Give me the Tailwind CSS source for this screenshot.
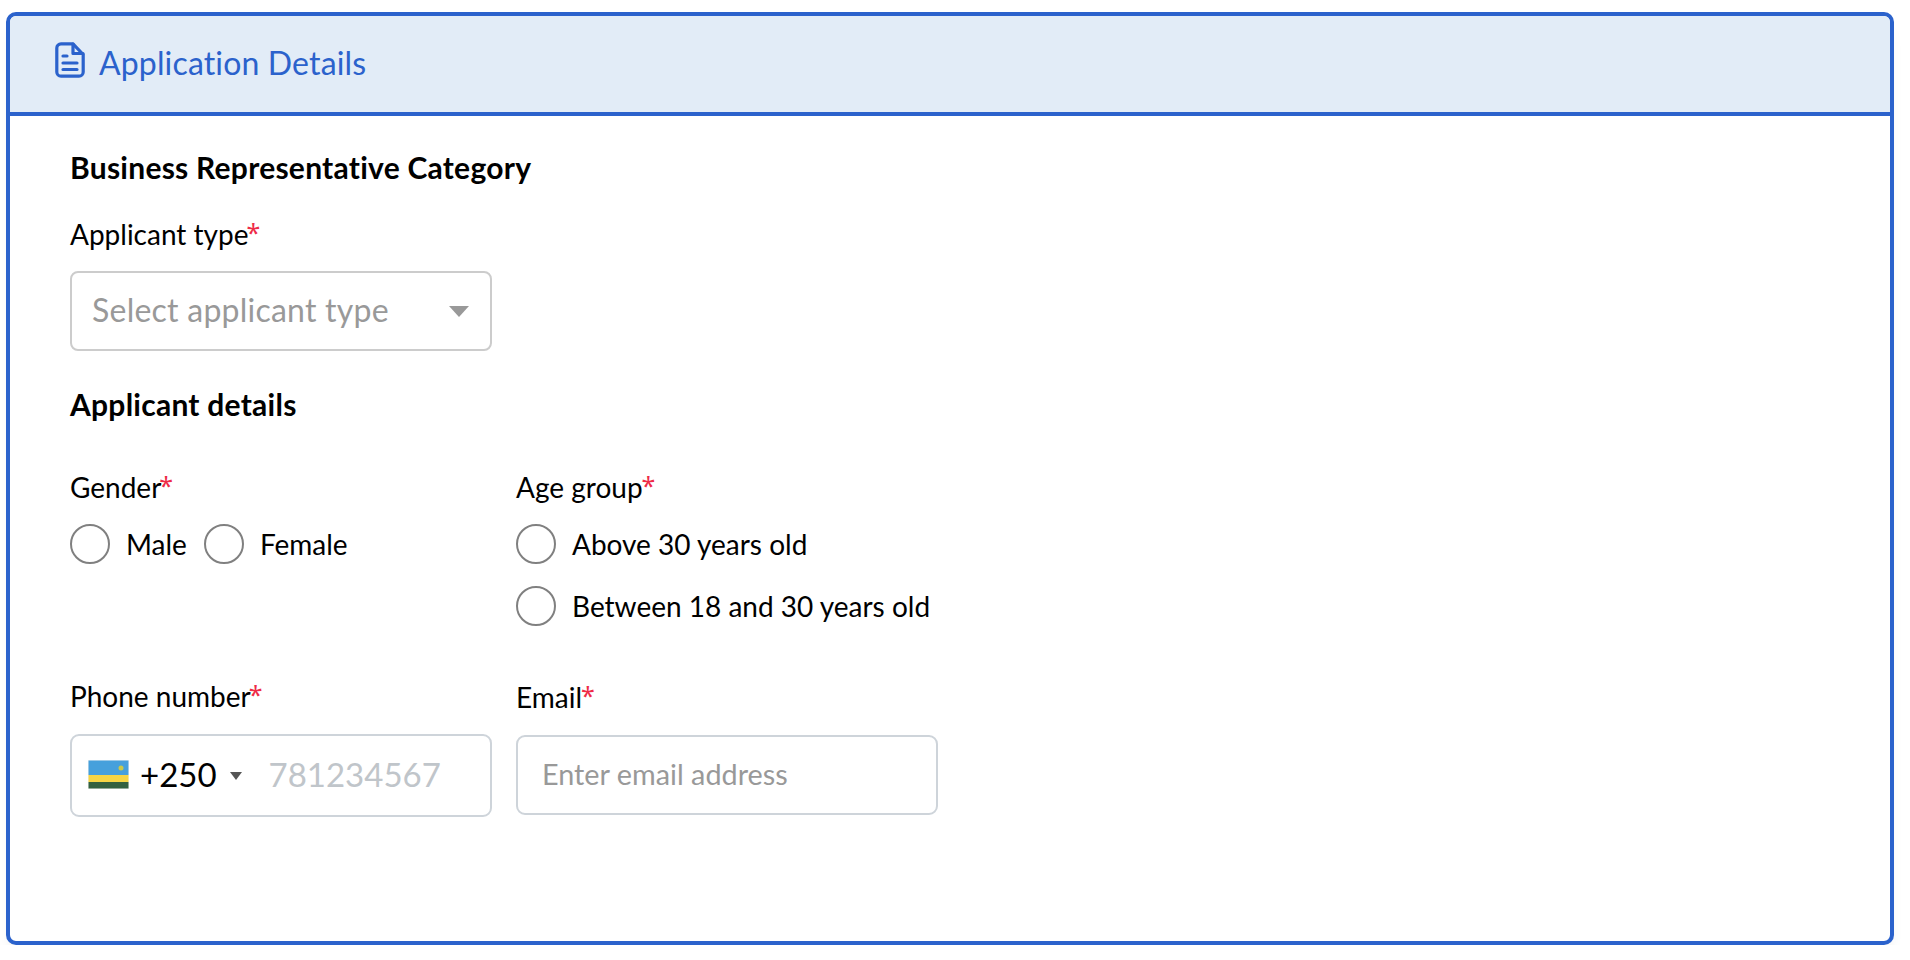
<!doctype html>
<html lang="en">
  <head>
    <meta charset="UTF-8" />
    <title>Application Details</title>
    <script src="https://cdn.jsdelivr.net/npm/@tailwindcss/browser@4"></script>
  </head>
  <body class="bg-white font-['Lato','Noto_Sans',sans-serif] text-black [font-variant-ligatures:none]">
    <!-- card -->
    <section class="mt-3 ml-1.5 w-[1888px] h-[933px] border-4 border-[#2b62cc] rounded-[10px] overflow-hidden bg-white shadow-[0_14px_16px_-6px_rgba(0,0,0,0.08)]">
      <header class="h-[96px] bg-[#e2ecf7] border-b-4 border-[#2b62cc] box-content -mb-1 flex items-center pl-[45px] gap-[14px] text-[#2b62cc]">
        <svg class="w-[30px] h-[36px] -mt-[8px]" viewBox="0 0 30 36" fill="none" stroke="currentColor" stroke-width="3.200" stroke-linejoin="round" stroke-linecap="round">
          <path d="M6 1.800H18L28.200 12.500V30A4.200 4.200 0 0 1 24 34.200H6A4.200 4.200 0 0 1 1.800 30V6A4.200 4.200 0 0 1 6 1.800Z" />
          <path d="M18 2V11.500H28" />
          <path d="M8 14H12M8 21H22M8 27.500H22" />
        </svg>
        <h2 class="text-[32px] leading-[40px] -mt-[2px] tracking-[0.15px]">Application Details</h2>
      </header>

      <div class="pl-[60px] pt-[35px]">
        <h3 class="text-[30px] leading-[40px] font-bold tracking-[0.25px]">Business Representative Category</h3>

        <label class="block mt-[27px] text-[28px] leading-[40px]">Applicant type<span class="-ml-[2px] align-[3px] font-['Noto_Sans'] text-[25px] leading-none text-[#ee2b47]">*</span></label>
        <div class="mt-[17px] w-[422px] h-[80px] border-2 border-[#cccccc] rounded-[8px] flex items-center justify-between pl-[20px] pr-[21px]">
          <span class="-mt-[2px] text-[32px] tracking-[0.24px] text-[#999999]">Select applicant type</span>
          <span class="w-0 h-0 border-x-[10px] border-x-transparent border-t-[11px] border-t-[#999999]"></span>
        </div>

        <h3 class="mt-[33px] text-[30px] leading-[40px] font-bold tracking-[0.25px]">Applicant details</h3>

        <div class="mt-[43px] grid grid-cols-[422px_422px] gap-x-[24px]">
          <div>
            <label class="block text-[28px] leading-[40px]">Gender<span class="-ml-[2px] align-[3px] font-['Noto_Sans'] text-[25px] leading-none text-[#ee2b47]">*</span></label>
            <div class="mt-[17px] flex">
              <label class="flex items-center gap-[16px] text-[28px] leading-[40px]">
                <input type="radio" name="gender" class="appearance-none w-[40px] h-[40px] rounded-full border-2 border-[#808080]" />Male
              </label>
              <label class="ml-[17px] flex items-center gap-[16px] text-[28px] leading-[40px]">
                <input type="radio" name="gender" class="appearance-none w-[40px] h-[40px] rounded-full border-2 border-[#808080]" />Female
              </label>
            </div>
          </div>
          <div>
            <label class="block text-[28px] leading-[40px]">Age group<span class="-ml-[1px] align-[3px] font-['Noto_Sans'] text-[25px] leading-none text-[#ee2b47]">*</span></label>
            <div class="mt-[17px] flex flex-col gap-[22px]">
              <label class="flex items-center gap-[16px] text-[28px] leading-[40px]">
                <input type="radio" name="age" class="appearance-none w-[40px] h-[40px] rounded-full border-2 border-[#808080]" />Above 30 years old
              </label>
              <label class="flex items-center gap-[16px] text-[28px] leading-[40px]">
                <input type="radio" name="age" class="appearance-none w-[40px] h-[40px] rounded-full border-2 border-[#808080]" />Between 18 and 30 years old
              </label>
            </div>
          </div>

          <div class="mt-[50px]">
            <label class="block text-[28px] leading-[40px]">Phone number<span class="-ml-[2px] align-[3px] font-['Noto_Sans'] text-[25px] leading-none text-[#ee2b47]">*</span></label>
            <div class="mt-[18px] h-[83px] border-2 border-[#ced4da] rounded-[9px] flex items-center pl-[16px]">
              <!-- flag -->
              <svg class="w-[41px] h-[29px] -mt-[2px]" viewBox="0 0 41 29">
                <rect width="41" height="29" fill="#f2f2f2" />
                <rect x="0.500" y="0.500" width="40" height="14.500" fill="#46a0dc" />
                <rect x="0.500" y="15" width="40" height="7" fill="#f6d545" />
                <rect x="0.500" y="22" width="40" height="6.500" fill="#33613f" />
                <circle cx="33" cy="8" r="2.500" fill="#c9c94a" />
              </svg>
              <span class="-mt-[2px] ml-[11px] text-[33px]">+250</span>
              <span class="ml-[13px] w-0 h-0 border-x-[6px] border-x-transparent border-t-[8px] border-t-[#555555]"></span>
              <input type="tel" placeholder="781234567" class="-mt-[2px] ml-[27px] w-[190px] text-[33px] outline-none placeholder:text-[#c0c5ca]" />
            </div>
          </div>
          <div class="mt-[51px]">
            <label class="block text-[28px] leading-[40px]">Email<span class="-ml-[1px] align-[3px] font-['Noto_Sans'] text-[25px] leading-none text-[#ee2b47]">*</span></label>
            <input type="email" placeholder="Enter email address" class="mt-[18px] block w-[422px] h-[80px] border-2 border-[#ced4da] rounded-[9px] pl-[24px] pb-[2px] text-[28.8px] outline-none placeholder:text-[#999999]" />
          </div>
        </div>
      </div>
    </section>
  </body>
</html>
